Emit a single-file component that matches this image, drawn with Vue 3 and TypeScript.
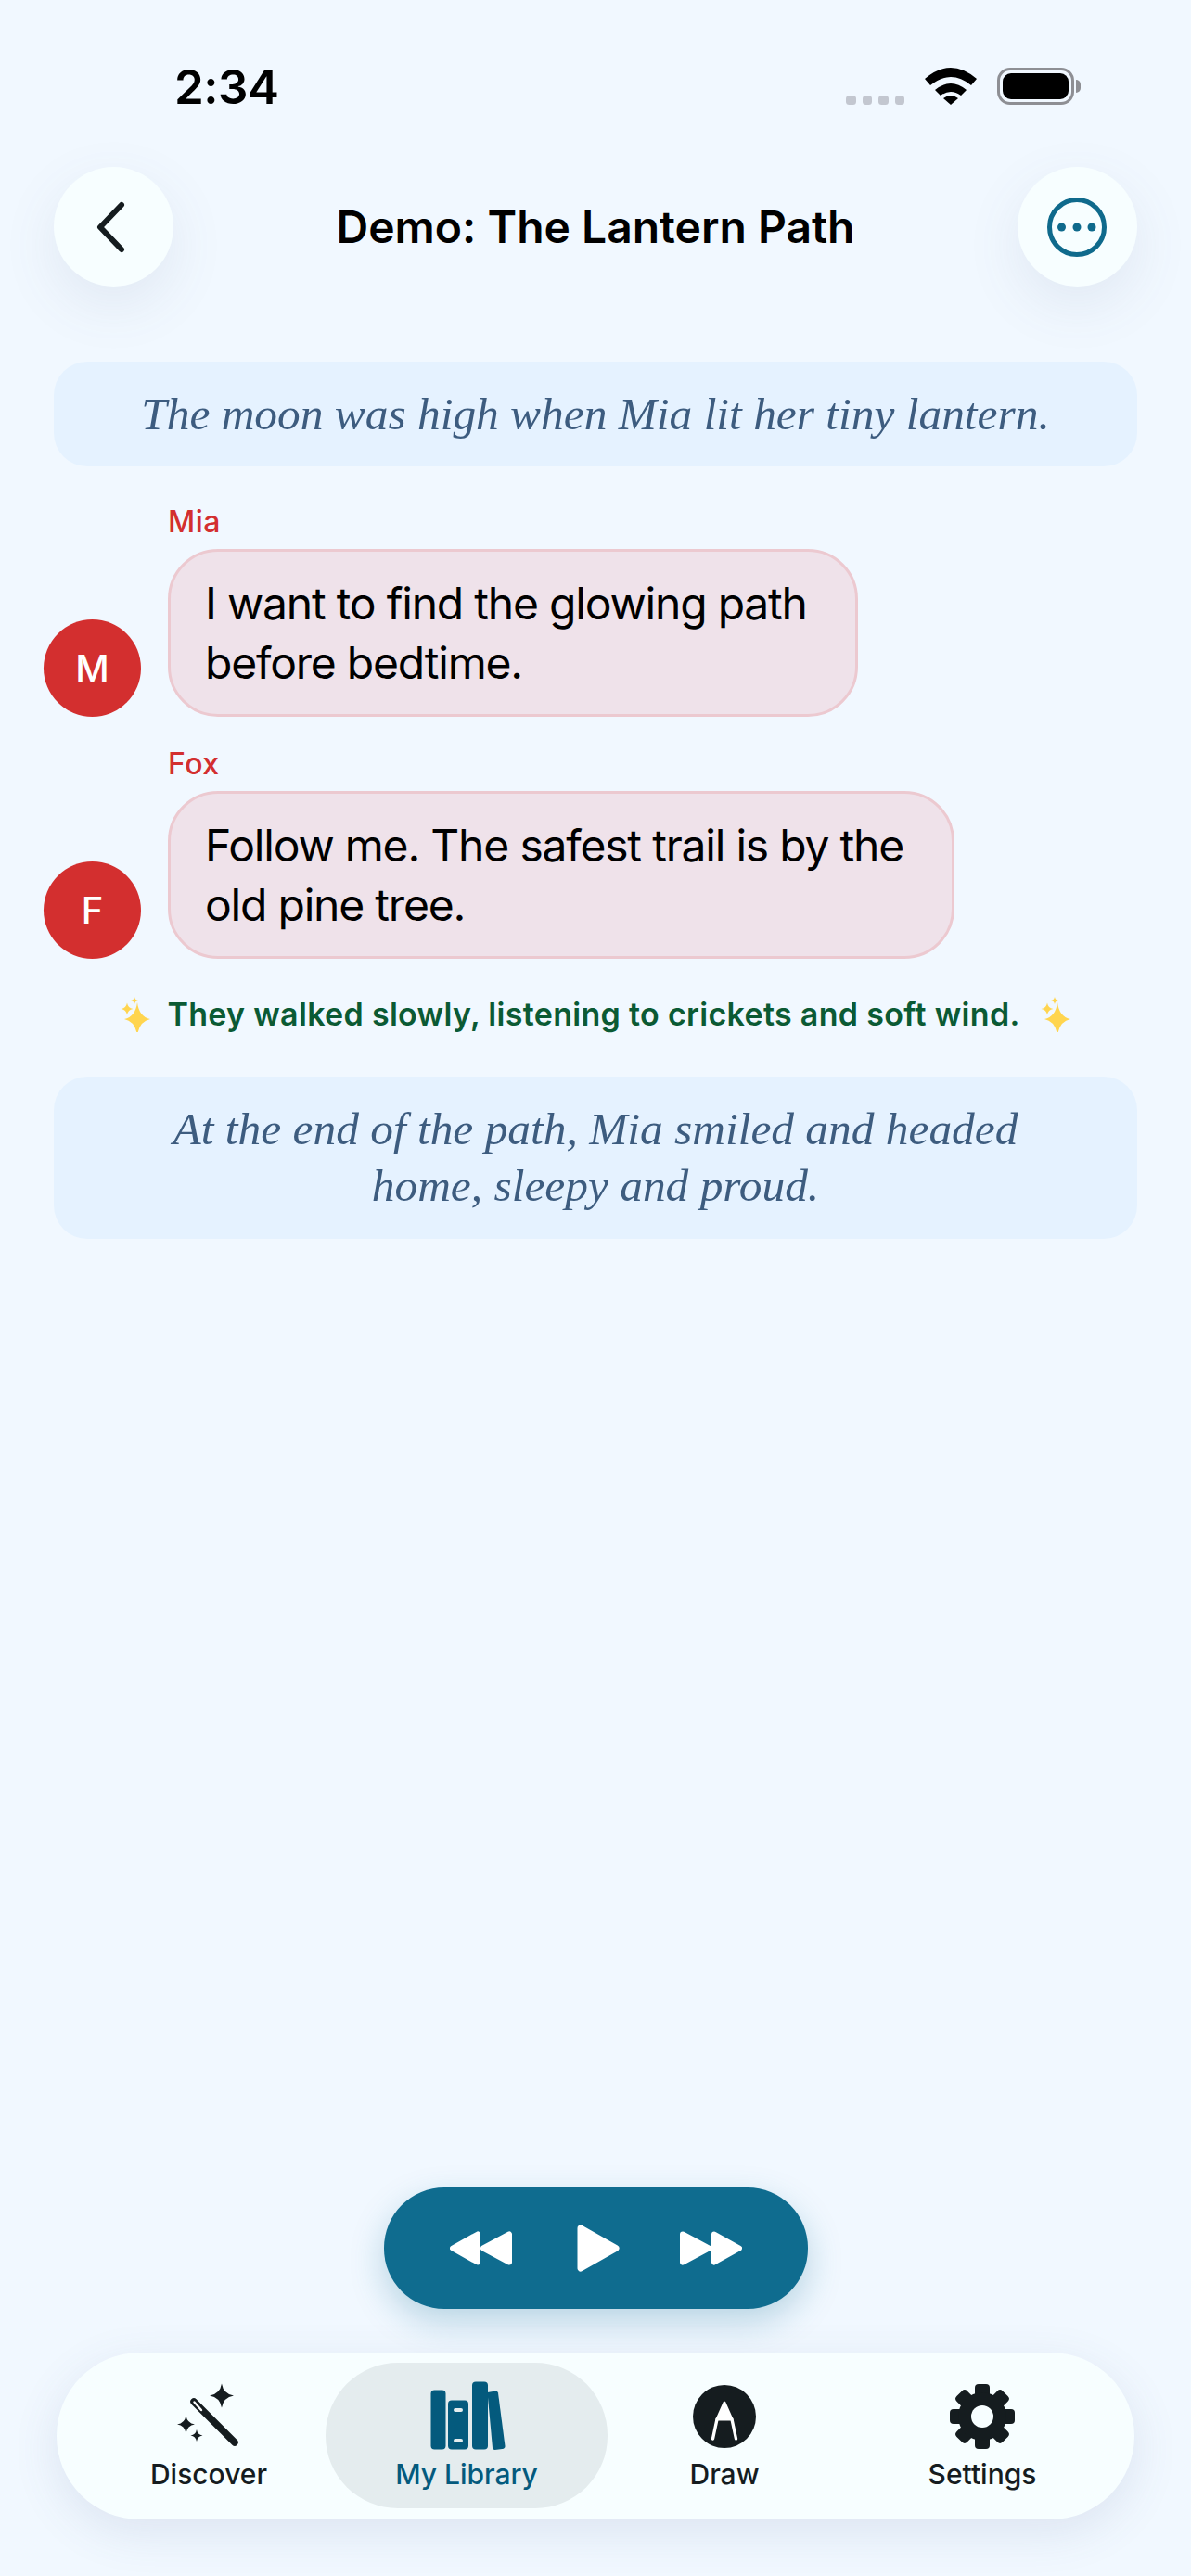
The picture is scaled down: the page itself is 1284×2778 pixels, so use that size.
<template>
  <div class="screen">
    <div class="status">
      <span class="time">2:34</span>
      <div class="status-icons">
        <div class="signal"><i v-for="n in 4" :key="n"></i></div>
        <svg class="wifi" width="56" height="40" viewBox="0 0 56 40">
          <path d="M0 12 Q28 -12 56 12 L50 19 Q28 1 6 19 Z" />
          <path d="M11 24 Q28 10 45 24 L39 30 Q28 22 17 30 Z" />
          <path d="M20 33 Q28 27 36 33 L28 40 Z" />
        </svg>
        <div class="battery"><i></i></div>
        <div class="nub"></div>
      </div>
    </div>

    <header class="topbar">
      <button class="round">
        <svg width="40" height="64" viewBox="0 0 40 64" fill="none">
          <path d="M28 8 L5 32 L28 56" stroke="#151c1f" stroke-width="6" stroke-linecap="round" stroke-linejoin="round" />
        </svg>
      </button>
      <h1 class="title">Demo: The Lantern Path</h1>
      <button class="round">
        <svg width="70" height="70" viewBox="0 0 70 70">
          <circle cx="35" cy="35" r="29.5" fill="none" stroke="#0f6a8c" stroke-width="5" />
          <circle cx="18.5" cy="35" r="4.5" fill="#0f6a8c" />
          <circle cx="35" cy="35" r="4.5" fill="#0f6a8c" />
          <circle cx="51" cy="35" r="4.5" fill="#0f6a8c" />
        </svg>
      </button>
    </header>

    <main class="story">
      <p class="narration first">The moon was high when Mia lit her tiny lantern.</p>

      <div v-for="msg in messages" :key="msg.name" class="message">
        <div class="avatar">{{ msg.name[0] }}</div>
        <div class="msg-body">
          <div class="speaker">{{ msg.name }}</div>
          <div class="bubble">{{ msg.text }}</div>
        </div>
      </div>

      <div class="action">
        <svg v-for="side in 2" :key="side" class="sparkle" width="32" height="38" viewBox="0 0 32 38">
          <path :d="star(18, 24, 14, 18)" />
          <path :d="star(7, 13, 6.5, 6.5)" />
          <path :d="star(15, 4, 4, 4)" />
        </svg>
        <span class="action-text">They walked slowly, listening to crickets and soft wind.</span>
      </div>

      <p class="narration">At the end of the path, Mia smiled and headed<br />home, sleepy and proud.</p>
    </main>

    <div class="spacer"></div>

    <div class="player">
      <svg width="67" height="37" viewBox="0 0 67 37" fill="#fff" stroke="#fff" stroke-width="6" stroke-linejoin="round">
        <polygon points="3,18.5 30,3.5 30,33.5" />
        <polygon points="36,18.5 64,3.5 64,33.5" />
      </svg>
      <svg class="play" width="46" height="51" viewBox="0 0 46 51" fill="#fff" stroke="#fff" stroke-width="7" stroke-linejoin="round">
        <polygon points="4,4 42,25.5 4,47" />
      </svg>
      <svg width="67" height="37" viewBox="0 0 67 37" fill="#fff" stroke="#fff" stroke-width="6" stroke-linejoin="round">
        <polygon points="3,3.5 31,18.5 3,33.5" />
        <polygon points="37,3.5 64,18.5 37,33.5" />
      </svg>
    </div>

    <nav class="tabs">
      <div class="tab">
        <svg width="80" height="80" viewBox="0 0 80 80">
          <g transform="translate(-1 0)">
            <path :d="star(55, 17.5, 13, 13)" fill="#151c1f" />
            <path :d="star(16.5, 48.5, 9.5, 9.5)" fill="#151c1f" />
            <path :d="star(28, 60.5, 6.5, 6.5)" fill="#151c1f" />
            <path d="M25 24 L69 68" stroke="#151c1f" stroke-width="7.5" stroke-linecap="round" />
            <path d="M25.5 24.5 L33 33" stroke="#fff" stroke-width="2.4" stroke-linecap="round" />
          </g>
        </svg>
        <span>Discover</span>
      </div>
      <div class="tab active">
        <svg class="books" width="80" height="80" viewBox="0 0 80 80" fill="#045a7d">
          <rect x="0" y="11.5" width="16" height="64" rx="4" />
          <path fill-rule="evenodd" d="M22.5 22.5 H36.5 A4 4 0 0 1 40.5 26.5 V71.5 A4 4 0 0 1 36.5 75.5 H22.5 A4 4 0 0 1 18.5 71.5 V26.5 A4 4 0 0 1 22.5 22.5 Z M26.5 31 A2 2 0 0 0 26.5 35 H32.5 A2 2 0 0 0 32.5 31 Z M26.5 64 A2 2 0 0 0 26.5 68 H32.5 A2 2 0 0 0 32.5 64 Z" />
          <rect x="44.5" y="2.5" width="17" height="73" rx="4" />
          <path d="M61 14 L70 12.5 Q72 12.5 72.5 14.5 L80 72 Q80 74.5 77 75 L69 76 Q67 76 66.5 74 Z" />
        </svg>
        <span>My Library</span>
      </div>
      <div class="tab">
        <svg width="80" height="80" viewBox="0 0 80 80">
          <circle cx="40" cy="40" r="34" fill="#151c1f" />
          <path d="M40 25 L48 43 H32 Z" fill="#fff" stroke="#fff" stroke-width="3" stroke-linejoin="round" />
          <path d="M32 43 L27.5 64 M48 43 L52.5 64" stroke="#fff" stroke-width="3.4" stroke-linecap="round" fill="none" />
        </svg>
        <span>Draw</span>
      </div>
      <div class="tab">
        <svg width="80" height="80" viewBox="0 0 80 80">
          <rect v-for="a in teeth" :key="a" x="32" y="5" width="16" height="20" rx="4" fill="#151c1f" :transform="`rotate(${a} 40 40)`" />
          <circle cx="40" cy="40" r="26" fill="#151c1f" />
          <circle cx="40" cy="40" r="12" fill="#f7feff" />
        </svg>
        <span>Settings</span>
      </div>
    </nav>
  </div>
</template>

<script setup lang="ts">
const messages = [
  { name: 'Mia', text: 'I want to find the glowing path\nbefore bedtime.' },
  { name: 'Fox', text: 'Follow me. The safest trail is by the\nold pine tree.' },
];

const teeth = [0, 45, 90, 135, 180, 225, 270, 315];

// four point star, used for the sparkles
const star = (cx: number, cy: number, rx: number, ry: number) => {
  const kx = rx * 0.14;
  const ky = ry * 0.14;
  return `M${cx} ${cy - ry} Q${cx + kx} ${cy - ky} ${cx + rx} ${cy} Q${cx + kx} ${cy + ky} ${cx} ${cy + ry} Q${cx - kx} ${cy + ky} ${cx - rx} ${cy} Q${cx - kx} ${cy - ky} ${cx} ${cy - ry} Z`;
};
</script>

<style>
html, body {
  background: #f1f8ff;
}
</style>

<style scoped>
.screen {
  display: flex;
  flex-direction: column;
  height: 2778px;
  box-sizing: border-box;
  padding-bottom: 61px;
  background: #f1f8ff;
  font-family: Inter, "Noto Sans", sans-serif;
  color: #000;
  overflow: hidden;
}

.status {
  display: flex;
  justify-content: space-between;
  height: 180px;
  box-sizing: border-box;
  padding: 64px 119px 0 188px;
}
.time {
  font-size: 51px;
  font-weight: 600;
  line-height: 60px;
  letter-spacing: -0.5px;
}
.status-icons {
  display: flex;
  align-items: flex-end;
  height: 40px;
  margin-top: 9px;
}
.signal {
  display: flex;
  gap: 7px;
  margin-right: 22px;
}
.signal i {
  width: 10.5px;
  height: 10.5px;
  border-radius: 3.5px;
  background: #c3c7d0;
}
.wifi {
  fill: #000;
  margin-right: 22px;
}
.battery {
  box-sizing: border-box;
  width: 83px;
  height: 40px;
  padding: 3px;
  border: 3.5px solid #8e8f94;
  border-radius: 14px;
}
.battery i {
  display: block;
  height: 100%;
  border-radius: 9px;
  background: #000;
}
.nub {
  width: 5px;
  height: 14px;
  margin: 0 0 13px 2px;
  border-radius: 0 5px 5px 0;
  background: #8e8f94;
}

.topbar {
  display: flex;
  align-items: center;
  justify-content: space-between;
  padding: 0 58px;
}
.round {
  display: flex;
  align-items: center;
  justify-content: center;
  width: 129px;
  height: 129px;
  padding: 0;
  border: 0;
  border-radius: 50%;
  background: #f7feff;
  box-shadow: 0 20px 60px rgba(90, 100, 140, 0.1);
}
.title {
  margin: 0;
  font-size: 48px;
  font-weight: 600;
  line-height: 60px;
}

.story {
  display: flex;
  flex-direction: column;
  padding: 0 58px;
}
.narration {
  margin: 45px 0 0;
  padding: 26.5px 20px;
  border-radius: 36px;
  background: #e5f2ff;
  color: #3d5c7f;
  font-family: "Liberation Serif", serif;
  font-style: italic;
  font-size: 49.4px;
  line-height: 61px;
  text-align: center;
}
.narration.first {
  margin-top: 81px;
  padding: 0 20px;
  line-height: 113px;
  margin-bottom: 40px;
}

.message {
  display: flex;
  align-items: flex-end;
  gap: 29px;
  margin: 0 0 31px -11px;
}
.avatar {
  display: flex;
  align-items: center;
  justify-content: center;
  flex: none;
  width: 105px;
  height: 105px;
  border-radius: 50%;
  background: #d32f2f;
  color: #fff;
  font-size: 40px;
  font-weight: 500;
}
.speaker {
  margin-bottom: 9px;
  color: #d32f2f;
  font-size: 32px;
  font-weight: 550;
  line-height: 40px;
  letter-spacing: 0.5px;
}
.bubble {
  width: fit-content;
  padding: 23.5px 52px 23.5px 37px;
  border: 3px solid #ecc9d0;
  border-radius: 54px;
  background: #efe2ea;
  font-size: 48px;
  line-height: 64px;
  letter-spacing: -1.2px;
  white-space: pre-line;
}

.action {
  display: flex;
  align-items: center;
  justify-content: center;
  gap: 20px;
  margin-top: 6.5px;
  height: 44px;
}
.sparkle {
  fill: #ffd54f;
}
.action-text {
  order: 3;
  margin: 0 2px 0 -2px;
  color: #0b5a34;
  font-size: 34px;
  font-weight: 600;
  line-height: 44px;
  letter-spacing: 0.32px;
  white-space: nowrap;
}
.sparkle:first-child {
  order: 1;
}
.sparkle:nth-child(2) {
  order: 4;
}

.spacer {
  flex: 1;
}

.player {
  display: flex;
  align-items: center;
  justify-content: center;
  gap: 70px;
  align-self: center;
  width: 457px;
  height: 131px;
  border-radius: 65px;
  background: #0f6c8f;
  box-shadow: 0 14px 36px rgba(15, 108, 143, 0.25);
}
.play {
  margin-right: -5px;
}

.tabs {
  display: grid;
  grid-template-columns: repeat(4, 278px);
  align-self: center;
  box-sizing: border-box;
  width: 1162px;
  height: 180px;
  margin-top: 47px;
  padding: 11px 25px 12px;
  border-radius: 90px;
  background: #f7feff;
  box-shadow: 0 14px 50px rgba(70, 90, 140, 0.12);
}
.tab {
  display: flex;
  flex-direction: column;
  align-items: center;
  padding-top: 18px;
  color: #151c1f;
  font-size: 30px;
  font-weight: 500;
  line-height: 36px;
}
.tab span {
  margin-top: 4px;
}
.tab.active {
  margin: 0 -13px;
  border-radius: 78px;
  background: #e4ecee;
  color: #045a7d;
}
.books {
  overflow: visible;
  transform: translateX(1.5px);
}
</style>
